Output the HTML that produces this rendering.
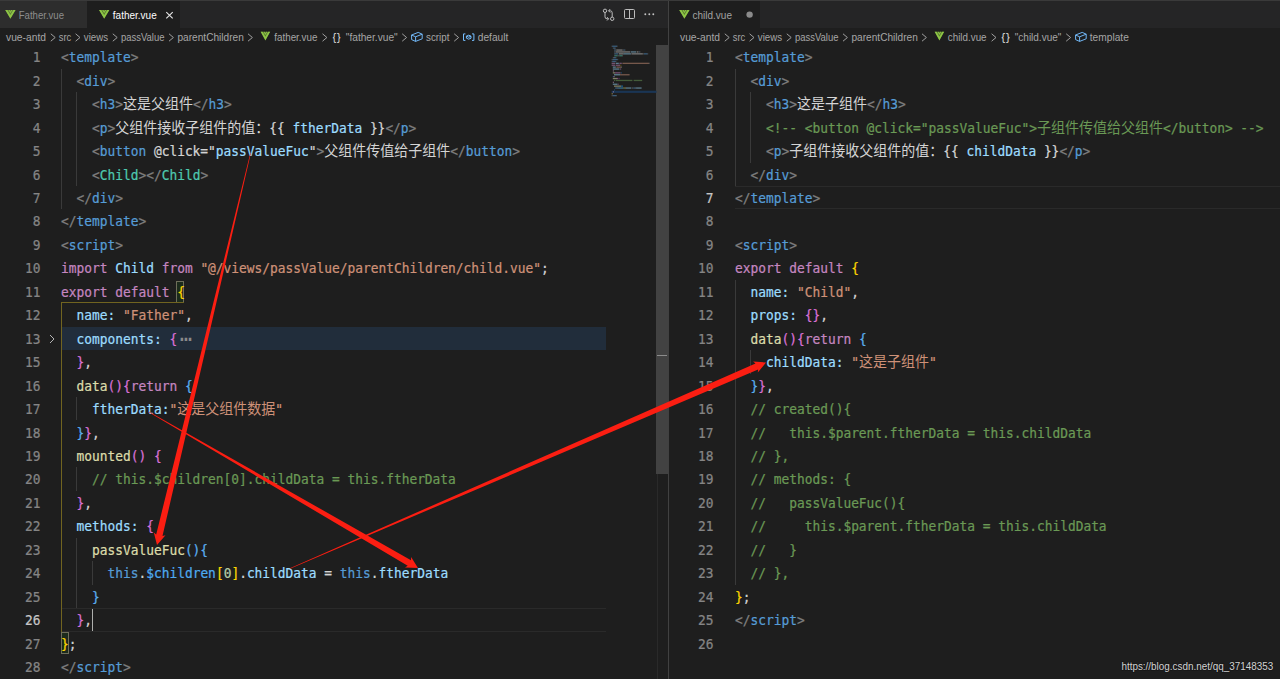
<!DOCTYPE html>
<html lang="zh"><head><meta charset="utf-8"><title>father.vue - child.vue</title>
<style>
html,body{margin:0;padding:0;background:#1e1e1e;overflow:hidden}
body{width:1280px;height:679px;position:relative;font-family:"Liberation Sans","Noto Sans CJK SC",sans-serif;color:#d4d4d4}
.abs{position:absolute}
.cl,.ln{position:absolute;height:23.45px;line-height:23.45px;white-space:pre;font-family:"DejaVu Sans Mono","Liberation Mono","Noto Sans CJK SC",monospace;font-size:12.87px;letter-spacing:0;-webkit-text-stroke:0.22px currentColor;transform:translateY(0.5px) scaleY(1.07);transform-origin:0 50%}
.ln{width:40px;text-align:right;color:#858585}
.ln.a{color:#c6c6c6}
.z{font-size:14.0px;font-family:"Noto Sans CJK SC",sans-serif;letter-spacing:0;line-height:0;position:relative;top:0.3px;-webkit-text-stroke:0}
.g{color:#808080}.b{color:#569cd6}.w{color:#d4d4d4}.v{color:#9cdcfe}.t{color:#4ec9b0}
.k{color:#c586c0}.s{color:#ce9178}.y{color:#ffd700}.p{color:#da70d6}.u{color:#5aaef0}.v2{color:#4eaaf0}
.f{color:#dcdcaa}.c{color:#6a9955}.n{color:#b5cea8}.fold{color:#8a8a8a;font-size:20px;line-height:0;margin-left:2.5px;position:relative;top:1.5px;-webkit-text-stroke:0}
.ig{position:absolute;width:1px;background:#3a3a3a}
.ig.gold{background:#716420;width:1.3px}
.tab{position:absolute;top:1px;height:27px;line-height:27px;font-size:11px;white-space:pre}
.bc{position:absolute;top:28px;height:18px;line-height:18px;font-size:11px;color:#a9a9a9;white-space:pre}
.bc i{font-style:normal;display:inline-block}
.vue{position:absolute}
</style></head><body>
<!-- top strip -->
<div class="abs" style="left:0;top:0;width:1280px;height:1px;background:#3a3a3a"></div>
<!-- tab bars -->
<div class="abs" style="left:0;top:1px;width:668px;height:27px;background:#252526"></div>
<div class="abs" style="left:669px;top:1px;width:611px;height:27px;background:#252526"></div>
<div class="abs" style="left:0;top:1px;width:87px;height:27px;background:#2d2d2d"></div>
<div class="abs" style="left:87px;top:1px;width:93px;height:27px;background:#1e1e1e"></div>
<div class="abs" style="left:669px;top:1px;width:91px;height:27px;background:#1e1e1e"></div>
<!-- pane divider -->
<div class="abs" style="left:667.5px;top:1px;width:1.3px;height:678px;background:#414141"></div>
<svg class="abs" style="left:0;top:0" width="1280" height="46" viewBox="0 0 1280 46" font-family="Liberation Sans, sans-serif" font-size="10.5">
<g transform="translate(5.20 10.10) scale(0.6500 0.6214)"><path d="M0.5 0 L8 13 L15.5 0 Z" fill="#8bc540" opacity="0.55"/><path d="M0 0 L8 14 L16 0 L12.6 0 L8 8 L3.4 0 Z" fill="#8dc545"/><path d="M5 0 L8 5.2 L11 0 L9.4 0 L8 2.4 L6.6 0 Z" fill="#8dc545"/></g>
<text x="18.75" y="18.80" textLength="45.25" lengthAdjust="spacingAndGlyphs" fill="#8e8e8e" font-size="10.5">Father.vue</text>
<g transform="translate(99.00 10.10) scale(0.6500 0.6214)"><path d="M0.5 0 L8 13 L15.5 0 Z" fill="#8bc540" opacity="0.55"/><path d="M0 0 L8 14 L16 0 L12.6 0 L8 8 L3.4 0 Z" fill="#8dc545"/><path d="M5 0 L8 5.2 L11 0 L9.4 0 L8 2.4 L6.6 0 Z" fill="#8dc545"/></g>
<text x="112.80" y="18.80" textLength="43.90" lengthAdjust="spacingAndGlyphs" fill="#ffffff" font-size="10.5">father.vue</text>
<path d="M166.3 12.2 L172.7 18.4 M172.7 12.2 L166.3 18.4" stroke="#e6e6e6" stroke-width="1.1" fill="none"/>
<g transform="translate(679.20 10.10) scale(0.6500 0.6214)"><path d="M0.5 0 L8 13 L15.5 0 Z" fill="#8bc540" opacity="0.55"/><path d="M0 0 L8 14 L16 0 L12.6 0 L8 8 L3.4 0 Z" fill="#8dc545"/><path d="M5 0 L8 5.2 L11 0 L9.4 0 L8 2.4 L6.6 0 Z" fill="#8dc545"/></g>
<text x="692.50" y="18.80" textLength="39.50" lengthAdjust="spacingAndGlyphs" fill="#a3a3a3" font-size="10.5">child.vue</text>
<circle cx="749.6" cy="14.6" r="3.2" fill="#8b8b8b"/>
<g stroke="#bdbdbd" stroke-width="1" fill="none" transform="translate(0 0.2)"><circle cx="605" cy="10.6" r="1.7"/><circle cx="612.2" cy="18.6" r="1.7"/><path d="M605 12.3 V16.6 Q605 18.6 607 18.6 H608.3 M612.2 16.9 V12.6 Q612.2 10.6 610.2 10.6 H608.9"/><path d="M607 16.9 L608.7 18.6 L607 20.3 M610.2 8.9 L608.5 10.6 L610.2 12.3"/></g>
<g stroke="#bdbdbd" stroke-width="1" fill="none"><rect x="624.5" y="9.5" width="10" height="9" rx="1"/><path d="M629.5 9.5 V18.5"/></g>
<g fill="#c4c4c4"><circle cx="645.3" cy="14.3" r="0.95"/><circle cx="649.3" cy="14.3" r="0.95"/><circle cx="653.3" cy="14.3" r="0.95"/></g>
<text x="6.00" y="41.00" textLength="40.00" lengthAdjust="spacingAndGlyphs" fill="#a6a6a6" font-size="10.5">vue-antd</text>
<path d="M50.80 33.80 l4.40 3.70 l-4.40 3.70" stroke="#a0a0a0" stroke-width="1" fill="none"/>
<text x="58.80" y="41.00" textLength="12.40" lengthAdjust="spacingAndGlyphs" fill="#a6a6a6" font-size="10.5">src</text>
<path d="M75.60 33.80 l4.40 3.70 l-4.40 3.70" stroke="#a0a0a0" stroke-width="1" fill="none"/>
<text x="83.80" y="41.00" textLength="24.20" lengthAdjust="spacingAndGlyphs" fill="#a6a6a6" font-size="10.5">views</text>
<path d="M112.80 33.80 l4.40 3.70 l-4.40 3.70" stroke="#a0a0a0" stroke-width="1" fill="none"/>
<text x="121.00" y="41.00" textLength="43.50" lengthAdjust="spacingAndGlyphs" fill="#a6a6a6" font-size="10.5">passValue</text>
<path d="M169.00 33.80 l4.40 3.70 l-4.40 3.70" stroke="#a0a0a0" stroke-width="1" fill="none"/>
<text x="177.50" y="41.00" textLength="66.30" lengthAdjust="spacingAndGlyphs" fill="#a6a6a6" font-size="10.5">parentChildren</text>
<path d="M248.00 33.80 l4.40 3.70 l-4.40 3.70" stroke="#a0a0a0" stroke-width="1" fill="none"/>
<g transform="translate(260.60 31.80) scale(0.6000 0.6143)"><path d="M0.5 0 L8 13 L15.5 0 Z" fill="#8bc540" opacity="0.55"/><path d="M0 0 L8 14 L16 0 L12.6 0 L8 8 L3.4 0 Z" fill="#8dc545"/><path d="M5 0 L8 5.2 L11 0 L9.4 0 L8 2.4 L6.6 0 Z" fill="#8dc545"/></g>
<text x="274.20" y="41.00" textLength="43.30" lengthAdjust="spacingAndGlyphs" fill="#a6a6a6" font-size="10.5">father.vue</text>
<path d="M322.50 33.80 l4.40 3.70 l-4.40 3.70" stroke="#a0a0a0" stroke-width="1" fill="none"/>
<text x="332.20" y="40.70" textLength="8.80" lengthAdjust="spacingAndGlyphs" fill="#cccccc" font-size="10.5" font-family="Liberation Mono, monospace" font-weight="bold">{}</text>
<text x="345.80" y="41.00" textLength="51.90" lengthAdjust="spacingAndGlyphs" fill="#a6a6a6" font-size="10.5">"father.vue"</text>
<path d="M402.20 33.80 l4.40 3.70 l-4.40 3.70" stroke="#a0a0a0" stroke-width="1" fill="none"/>
<g transform="translate(411.00 31.80)" stroke="#75beff" stroke-width="0.95" fill="none" stroke-linejoin="round"><path d="M0.6 3.2 L7.2 0.6 L11.2 2.4 L11.2 7 L4.6 9.6 L0.6 7.8 Z"/><path d="M0.6 3.2 L4.6 5 L11.2 2.4 M4.6 5 L4.6 9.6"/></g>
<text x="426.00" y="41.00" textLength="23.40" lengthAdjust="spacingAndGlyphs" fill="#a6a6a6" font-size="10.5">script</text>
<path d="M454.20 33.80 l4.40 3.70 l-4.40 3.70" stroke="#a0a0a0" stroke-width="1" fill="none"/>
<g transform="translate(463.00 33.40)" stroke="#75beff" stroke-width="1" fill="none"><path d="M2.4 0.5 H0.5 V7 H2.4 M9 0.5 H10.9 V7 H9"/><path d="M3.4 2.8 L5.7 1.8 L8 2.8 L8 4.8 L5.7 5.8 L3.4 4.8 Z M3.4 2.8 L5.7 3.8 L8 2.8"/></g>
<text x="477.80" y="41.00" textLength="30.50" lengthAdjust="spacingAndGlyphs" fill="#a6a6a6" font-size="10.5">default</text>
<text x="680.00" y="41.00" textLength="40.00" lengthAdjust="spacingAndGlyphs" fill="#a6a6a6" font-size="10.5">vue-antd</text>
<path d="M724.80 33.80 l4.40 3.70 l-4.40 3.70" stroke="#a0a0a0" stroke-width="1" fill="none"/>
<text x="732.80" y="41.00" textLength="12.40" lengthAdjust="spacingAndGlyphs" fill="#a6a6a6" font-size="10.5">src</text>
<path d="M749.60 33.80 l4.40 3.70 l-4.40 3.70" stroke="#a0a0a0" stroke-width="1" fill="none"/>
<text x="757.80" y="41.00" textLength="24.20" lengthAdjust="spacingAndGlyphs" fill="#a6a6a6" font-size="10.5">views</text>
<path d="M786.80 33.80 l4.40 3.70 l-4.40 3.70" stroke="#a0a0a0" stroke-width="1" fill="none"/>
<text x="795.00" y="41.00" textLength="43.50" lengthAdjust="spacingAndGlyphs" fill="#a6a6a6" font-size="10.5">passValue</text>
<path d="M843.00 33.80 l4.40 3.70 l-4.40 3.70" stroke="#a0a0a0" stroke-width="1" fill="none"/>
<text x="851.50" y="41.00" textLength="66.30" lengthAdjust="spacingAndGlyphs" fill="#a6a6a6" font-size="10.5">parentChildren</text>
<path d="M922.00 33.80 l4.40 3.70 l-4.40 3.70" stroke="#a0a0a0" stroke-width="1" fill="none"/>
<g transform="translate(934.60 31.80) scale(0.6000 0.6143)"><path d="M0.5 0 L8 13 L15.5 0 Z" fill="#8bc540" opacity="0.55"/><path d="M0 0 L8 14 L16 0 L12.6 0 L8 8 L3.4 0 Z" fill="#8dc545"/><path d="M5 0 L8 5.2 L11 0 L9.4 0 L8 2.4 L6.6 0 Z" fill="#8dc545"/></g>
<text x="947.80" y="41.00" textLength="38.80" lengthAdjust="spacingAndGlyphs" fill="#a6a6a6" font-size="10.5">child.vue</text>
<path d="M991.60 33.80 l4.40 3.70 l-4.40 3.70" stroke="#a0a0a0" stroke-width="1" fill="none"/>
<text x="1000.90" y="40.70" textLength="9.30" lengthAdjust="spacingAndGlyphs" fill="#cccccc" font-size="10.5" font-family="Liberation Mono, monospace" font-weight="bold">{}</text>
<text x="1014.80" y="41.00" textLength="46.50" lengthAdjust="spacingAndGlyphs" fill="#a6a6a6" font-size="10.5">"child.vue"</text>
<path d="M1066.20 33.80 l4.40 3.70 l-4.40 3.70" stroke="#a0a0a0" stroke-width="1" fill="none"/>
<g transform="translate(1075.00 31.80)" stroke="#75beff" stroke-width="0.95" fill="none" stroke-linejoin="round"><path d="M0.6 3.2 L7.2 0.6 L11.2 2.4 L11.2 7 L4.6 9.6 L0.6 7.8 Z"/><path d="M0.6 3.2 L4.6 5 L11.2 2.4 M4.6 5 L4.6 9.6"/></g>
<text x="1089.80" y="41.00" textLength="39.00" lengthAdjust="spacingAndGlyphs" fill="#a6a6a6" font-size="10.5">template</text>
</svg>


<!-- folded line highlight -->
<div class="abs" style="left:61px;top:326.70px;width:545px;height:23.45px;background:#212d3b"></div>
<!-- current line right -->
<div class="abs" style="left:735px;top:186.00px;width:545px;height:21.45px;border-top:1px solid #2a2a2a;border-bottom:1px solid #2a2a2a"></div>
<div class="abs" style="left:61px;top:608.10px;width:545px;height:21.45px;border-top:1px solid #2a2a2a;border-bottom:1px solid #2a2a2a"></div>
<div class="ig" style="left:61.00px;top:68.75px;height:140.70px"></div>
<div class="ig" style="left:76.49px;top:92.20px;height:93.80px"></div>
<div class="ig gold" style="left:61.00px;top:303.25px;height:328.30px"></div>
<div class="ig" style="left:76.49px;top:397.05px;height:23.45px"></div>
<div class="ig" style="left:76.49px;top:467.40px;height:23.45px"></div>
<div class="ig" style="left:76.49px;top:537.75px;height:70.35px"></div>
<div class="ig" style="left:91.98px;top:561.20px;height:23.45px"></div>
<div class="ig" style="left:735.00px;top:68.75px;height:117.25px"></div>
<div class="ig" style="left:750.49px;top:92.20px;height:70.35px"></div>
<div class="ig" style="left:735.00px;top:279.80px;height:304.85px"></div>
<div class="ig" style="left:750.49px;top:350.15px;height:23.45px"></div>
<!-- bracket match boxes -->
<div class="abs" style="left:176px;top:280.5px;width:8px;height:22px;border:1px solid #6e6e5a;background:#1c2b1c;box-sizing:border-box"></div>
<div class="abs" style="left:60.5px;top:631.5px;width:8.5px;height:22.5px;border:1px solid #6e6e5a;background:#1c2b1c;box-sizing:border-box"></div>
<div class="abs" style="left:61px;top:302px;width:123px;height:1.2px;background:#716420"></div>
<div class="ln" style="top:45.30px;left:0.50px">1</div>
<div class="cl" style="top:45.30px;left:61.00px"><span class="g">&lt;</span><span class="b">template</span><span class="g">&gt;</span></div>
<div class="ln" style="top:68.75px;left:0.50px">2</div>
<div class="cl" style="top:68.75px;left:76.49px"><span class="g">&lt;</span><span class="b">div</span><span class="g">&gt;</span></div>
<div class="ln" style="top:92.20px;left:0.50px">3</div>
<div class="cl" style="top:92.20px;left:91.98px"><span class="g">&lt;</span><span class="b">h3</span><span class="g">&gt;</span><span class="w"><span class="z">这是父组件</span></span><span class="g">&lt;/</span><span class="b">h3</span><span class="g">&gt;</span></div>
<div class="ln" style="top:115.65px;left:0.50px">4</div>
<div class="cl" style="top:115.65px;left:91.98px"><span class="g">&lt;</span><span class="b">p</span><span class="g">&gt;</span><span class="w"><span class="z">父组件接收子组件的值：</span>{{ </span><span class="v">ftherData</span><span class="w"> }}</span><span class="g">&lt;/</span><span class="b">p</span><span class="g">&gt;</span></div>
<div class="ln" style="top:139.10px;left:0.50px">5</div>
<div class="cl" style="top:139.10px;left:91.98px"><span class="g">&lt;</span><span class="b">button</span><span class="w"> @click="</span><span class="v">passValueFuc</span><span class="w">"</span><span class="g">&gt;</span><span class="w"><span class="z">父组件传值给子组件</span></span><span class="g">&lt;/</span><span class="b">button</span><span class="g">&gt;</span></div>
<div class="ln" style="top:162.55px;left:0.50px">6</div>
<div class="cl" style="top:162.55px;left:91.98px"><span class="g">&lt;</span><span class="t">Child</span><span class="g">&gt;</span><span class="g">&lt;/</span><span class="t">Child</span><span class="g">&gt;</span></div>
<div class="ln" style="top:186.00px;left:0.50px">7</div>
<div class="cl" style="top:186.00px;left:76.49px"><span class="g">&lt;/</span><span class="b">div</span><span class="g">&gt;</span></div>
<div class="ln" style="top:209.45px;left:0.50px">8</div>
<div class="cl" style="top:209.45px;left:61.00px"><span class="g">&lt;/</span><span class="b">template</span><span class="g">&gt;</span></div>
<div class="ln" style="top:232.90px;left:0.50px">9</div>
<div class="cl" style="top:232.90px;left:61.00px"><span class="g">&lt;</span><span class="b">script</span><span class="g">&gt;</span></div>
<div class="ln" style="top:256.35px;left:0.50px">10</div>
<div class="cl" style="top:256.35px;left:61.00px"><span class="k">import </span><span class="v">Child </span><span class="k">from </span><span class="s">"@/views/passValue/parentChildren/child.vue"</span><span class="w">;</span></div>
<div class="ln" style="top:279.80px;left:0.50px">11</div>
<div class="cl" style="top:279.80px;left:61.00px"><span class="k">export default </span><span class="y">{</span></div>
<div class="ln" style="top:303.25px;left:0.50px">12</div>
<div class="cl" style="top:303.25px;left:76.49px"><span class="v">name: </span><span class="s">"Father"</span><span class="w">,</span></div>
<div class="ln" style="top:326.70px;left:0.50px">13</div>
<div class="cl" style="top:326.70px;left:76.49px"><span class="v">components: </span><span class="p">{</span><span class="fold">⋯</span></div>
<div class="ln" style="top:350.15px;left:0.50px">15</div>
<div class="cl" style="top:350.15px;left:76.49px"><span class="p">}</span><span class="w">,</span></div>
<div class="ln" style="top:373.60px;left:0.50px">16</div>
<div class="cl" style="top:373.60px;left:76.49px"><span class="f">data</span><span class="p">(){</span><span class="k">return </span><span class="u">{</span></div>
<div class="ln" style="top:397.05px;left:0.50px">17</div>
<div class="cl" style="top:397.05px;left:91.98px"><span class="v">ftherData:</span><span class="s">"<span class="z">这是父组件数据</span>"</span></div>
<div class="ln" style="top:420.50px;left:0.50px">18</div>
<div class="cl" style="top:420.50px;left:76.49px"><span class="u">}</span><span class="p">}</span><span class="w">,</span></div>
<div class="ln" style="top:443.95px;left:0.50px">19</div>
<div class="cl" style="top:443.95px;left:76.49px"><span class="f">mounted</span><span class="p">() {</span></div>
<div class="ln" style="top:467.40px;left:0.50px">20</div>
<div class="cl" style="top:467.40px;left:91.98px"><span class="c">// this.$children[0].childData = this.ftherData</span></div>
<div class="ln" style="top:490.85px;left:0.50px">21</div>
<div class="cl" style="top:490.85px;left:76.49px"><span class="p">}</span><span class="w">,</span></div>
<div class="ln" style="top:514.30px;left:0.50px">22</div>
<div class="cl" style="top:514.30px;left:76.49px"><span class="v">methods: </span><span class="p">{</span></div>
<div class="ln" style="top:537.75px;left:0.50px">23</div>
<div class="cl" style="top:537.75px;left:91.98px"><span class="f">passValueFuc</span><span class="u">(){</span></div>
<div class="ln" style="top:561.20px;left:0.50px">24</div>
<div class="cl" style="top:561.20px;left:107.48px"><span class="b">this</span><span class="w">.</span><span class="v2">$children</span><span class="y">[</span><span class="n">0</span><span class="y">]</span><span class="w">.</span><span class="v">childData</span><span class="w"> = </span><span class="b">this</span><span class="w">.</span><span class="v">ftherData</span></div>
<div class="ln" style="top:584.65px;left:0.50px">25</div>
<div class="cl" style="top:584.65px;left:91.98px"><span class="u">}</span></div>
<div class="ln a" style="top:608.10px;left:0.50px">26</div>
<div class="cl" style="top:608.10px;left:76.49px"><span class="p">}</span><span class="w">,</span></div>
<div class="ln" style="top:631.55px;left:0.50px">27</div>
<div class="cl" style="top:631.55px;left:61.00px"><span class="y">}</span><span class="w">;</span></div>
<div class="ln" style="top:655.00px;left:0.50px">28</div>
<div class="cl" style="top:655.00px;left:61.00px"><span class="g">&lt;/</span><span class="b">script</span><span class="g">&gt;</span></div>
<div class="ln" style="top:45.30px;left:673.50px">1</div>
<div class="cl" style="top:45.30px;left:735.00px"><span class="g">&lt;</span><span class="b">template</span><span class="g">&gt;</span></div>
<div class="ln" style="top:68.75px;left:673.50px">2</div>
<div class="cl" style="top:68.75px;left:750.49px"><span class="g">&lt;</span><span class="b">div</span><span class="g">&gt;</span></div>
<div class="ln" style="top:92.20px;left:673.50px">3</div>
<div class="cl" style="top:92.20px;left:765.98px"><span class="g">&lt;</span><span class="b">h3</span><span class="g">&gt;</span><span class="w"><span class="z">这是子组件</span></span><span class="g">&lt;/</span><span class="b">h3</span><span class="g">&gt;</span></div>
<div class="ln" style="top:115.65px;left:673.50px">4</div>
<div class="cl" style="top:115.65px;left:765.98px"><span class="c">&lt;!-- &lt;button @click="passValueFuc"&gt;<span class="z">子组件传值给父组件</span>&lt;/button&gt; --&gt;</span></div>
<div class="ln" style="top:139.10px;left:673.50px">5</div>
<div class="cl" style="top:139.10px;left:765.98px"><span class="g">&lt;</span><span class="b">p</span><span class="g">&gt;</span><span class="w"><span class="z">子组件接收父组件的值：</span>{{ </span><span class="v">childData</span><span class="w"> }}</span><span class="g">&lt;/</span><span class="b">p</span><span class="g">&gt;</span></div>
<div class="ln" style="top:162.55px;left:673.50px">6</div>
<div class="cl" style="top:162.55px;left:750.49px"><span class="g">&lt;/</span><span class="b">div</span><span class="g">&gt;</span></div>
<div class="ln a" style="top:186.00px;left:673.50px">7</div>
<div class="cl" style="top:186.00px;left:735.00px"><span class="g">&lt;/</span><span class="b">template</span><span class="g">&gt;</span></div>
<div class="ln" style="top:209.45px;left:673.50px">8</div>
<div class="ln" style="top:232.90px;left:673.50px">9</div>
<div class="cl" style="top:232.90px;left:735.00px"><span class="g">&lt;</span><span class="b">script</span><span class="g">&gt;</span></div>
<div class="ln" style="top:256.35px;left:673.50px">10</div>
<div class="cl" style="top:256.35px;left:735.00px"><span class="k">export default </span><span class="y">{</span></div>
<div class="ln" style="top:279.80px;left:673.50px">11</div>
<div class="cl" style="top:279.80px;left:750.49px"><span class="v">name: </span><span class="s">"Child"</span><span class="w">,</span></div>
<div class="ln" style="top:303.25px;left:673.50px">12</div>
<div class="cl" style="top:303.25px;left:750.49px"><span class="v">props: </span><span class="p">{}</span><span class="w">,</span></div>
<div class="ln" style="top:326.70px;left:673.50px">13</div>
<div class="cl" style="top:326.70px;left:750.49px"><span class="f">data</span><span class="p">(){</span><span class="k">return </span><span class="u">{</span></div>
<div class="ln" style="top:350.15px;left:673.50px">14</div>
<div class="cl" style="top:350.15px;left:765.98px"><span class="v">childData: </span><span class="s">"<span class="z">这是子组件</span>"</span></div>
<div class="ln" style="top:373.60px;left:673.50px">15</div>
<div class="cl" style="top:373.60px;left:750.49px"><span class="u">}</span><span class="p">}</span><span class="w">,</span></div>
<div class="ln" style="top:397.05px;left:673.50px">16</div>
<div class="cl" style="top:397.05px;left:750.49px"><span class="c">// created(){</span></div>
<div class="ln" style="top:420.50px;left:673.50px">17</div>
<div class="cl" style="top:420.50px;left:750.49px"><span class="c">//   this.$parent.ftherData = this.childData</span></div>
<div class="ln" style="top:443.95px;left:673.50px">18</div>
<div class="cl" style="top:443.95px;left:750.49px"><span class="c">// },</span></div>
<div class="ln" style="top:467.40px;left:673.50px">19</div>
<div class="cl" style="top:467.40px;left:750.49px"><span class="c">// methods: {</span></div>
<div class="ln" style="top:490.85px;left:673.50px">20</div>
<div class="cl" style="top:490.85px;left:750.49px"><span class="c">//   passValueFuc(){</span></div>
<div class="ln" style="top:514.30px;left:673.50px">21</div>
<div class="cl" style="top:514.30px;left:750.49px"><span class="c">//     this.$parent.ftherData = this.childData</span></div>
<div class="ln" style="top:537.75px;left:673.50px">22</div>
<div class="cl" style="top:537.75px;left:750.49px"><span class="c">//   }</span></div>
<div class="ln" style="top:561.20px;left:673.50px">23</div>
<div class="cl" style="top:561.20px;left:750.49px"><span class="c">// },</span></div>
<div class="ln" style="top:584.65px;left:673.50px">24</div>
<div class="cl" style="top:584.65px;left:735.00px"><span class="y">}</span><span class="w">;</span></div>
<div class="ln" style="top:608.10px;left:673.50px">25</div>
<div class="cl" style="top:608.10px;left:735.00px"><span class="g">&lt;/</span><span class="b">script</span><span class="g">&gt;</span></div>
<div class="ln" style="top:631.55px;left:673.50px">26</div>

<!-- minimap slider / scrollbar -->
<div class="abs" style="left:656.2px;top:45.3px;width:11.9px;height:428.7px;background:#424242"></div>
<div class="abs" style="left:656.5px;top:474px;width:1px;height:205px;background:#2a2a2a"></div>
<div class="abs" style="left:657.1px;top:354.8px;width:10px;height:1.2px;background:#8c8c8c"></div>
<!-- fold chevron -->
<svg class="abs" style="left:47px;top:333px" width="10" height="12" viewBox="0 0 10 12"><path d="M3 2 L7 6 L3 10" stroke="#b4b4b4" stroke-width="1" fill="none"/></svg>
<!-- cursor -->
<div class="abs" style="left:92px;top:609px;width:1.3px;height:22px;background:#aeafad"></div>
<!-- arrows -->
<svg class="abs" style="left:0;top:0" width="1280" height="679" viewBox="0 0 1280 679">
<rect x="611.6" y="90.70" width="44.9" height="2.20" fill="#1a3554"/>
<rect x="611.60" y="45.60" width="0.60" height="1.3" fill="#808080" opacity="0.5"/>
<rect x="612.20" y="45.60" width="4.80" height="1.3" fill="#569cd6" opacity="0.5"/>
<rect x="617.00" y="45.60" width="0.60" height="1.3" fill="#808080" opacity="0.5"/>
<rect x="612.80" y="47.50" width="0.60" height="1.3" fill="#808080" opacity="0.5"/>
<rect x="613.40" y="47.50" width="1.80" height="1.3" fill="#569cd6" opacity="0.5"/>
<rect x="615.20" y="47.50" width="0.60" height="1.3" fill="#808080" opacity="0.5"/>
<rect x="614.00" y="49.40" width="0.60" height="1.3" fill="#808080" opacity="0.5"/>
<rect x="614.60" y="49.40" width="1.20" height="1.3" fill="#569cd6" opacity="0.5"/>
<rect x="615.80" y="49.40" width="0.60" height="1.3" fill="#808080" opacity="0.5"/>
<rect x="616.40" y="49.40" width="6.00" height="1.3" fill="#d4d4d4" opacity="0.5"/>
<rect x="622.40" y="49.40" width="1.20" height="1.3" fill="#808080" opacity="0.5"/>
<rect x="623.60" y="49.40" width="1.20" height="1.3" fill="#569cd6" opacity="0.5"/>
<rect x="624.80" y="49.40" width="0.60" height="1.3" fill="#808080" opacity="0.5"/>
<rect x="614.00" y="51.30" width="0.60" height="1.3" fill="#808080" opacity="0.5"/>
<rect x="614.60" y="51.30" width="0.60" height="1.3" fill="#569cd6" opacity="0.5"/>
<rect x="615.20" y="51.30" width="0.60" height="1.3" fill="#808080" opacity="0.5"/>
<rect x="615.80" y="51.30" width="14.40" height="1.3" fill="#d4d4d4" opacity="0.5"/>
<rect x="630.80" y="51.30" width="5.40" height="1.3" fill="#9cdcfe" opacity="0.5"/>
<rect x="636.80" y="51.30" width="1.20" height="1.3" fill="#d4d4d4" opacity="0.5"/>
<rect x="638.00" y="51.30" width="1.20" height="1.3" fill="#808080" opacity="0.5"/>
<rect x="639.20" y="51.30" width="0.60" height="1.3" fill="#569cd6" opacity="0.5"/>
<rect x="639.80" y="51.30" width="0.60" height="1.3" fill="#808080" opacity="0.5"/>
<rect x="614.00" y="53.20" width="0.60" height="1.3" fill="#808080" opacity="0.5"/>
<rect x="614.60" y="53.20" width="3.60" height="1.3" fill="#569cd6" opacity="0.5"/>
<rect x="618.80" y="53.20" width="4.80" height="1.3" fill="#d4d4d4" opacity="0.5"/>
<rect x="623.60" y="53.20" width="7.20" height="1.3" fill="#9cdcfe" opacity="0.5"/>
<rect x="630.80" y="53.20" width="0.60" height="1.3" fill="#d4d4d4" opacity="0.5"/>
<rect x="631.40" y="53.20" width="0.60" height="1.3" fill="#808080" opacity="0.5"/>
<rect x="632.00" y="53.20" width="10.80" height="1.3" fill="#d4d4d4" opacity="0.5"/>
<rect x="642.80" y="53.20" width="1.20" height="1.3" fill="#808080" opacity="0.5"/>
<rect x="644.00" y="53.20" width="3.60" height="1.3" fill="#569cd6" opacity="0.5"/>
<rect x="647.60" y="53.20" width="0.60" height="1.3" fill="#808080" opacity="0.5"/>
<rect x="614.00" y="55.10" width="0.60" height="1.3" fill="#808080" opacity="0.5"/>
<rect x="614.60" y="55.10" width="3.00" height="1.3" fill="#4ec9b0" opacity="0.5"/>
<rect x="617.60" y="55.10" width="0.60" height="1.3" fill="#808080" opacity="0.5"/>
<rect x="618.20" y="55.10" width="1.20" height="1.3" fill="#808080" opacity="0.5"/>
<rect x="619.40" y="55.10" width="3.00" height="1.3" fill="#4ec9b0" opacity="0.5"/>
<rect x="622.40" y="55.10" width="0.60" height="1.3" fill="#808080" opacity="0.5"/>
<rect x="612.80" y="57.00" width="1.20" height="1.3" fill="#808080" opacity="0.5"/>
<rect x="614.00" y="57.00" width="1.80" height="1.3" fill="#569cd6" opacity="0.5"/>
<rect x="615.80" y="57.00" width="0.60" height="1.3" fill="#808080" opacity="0.5"/>
<rect x="611.60" y="58.90" width="1.20" height="1.3" fill="#808080" opacity="0.5"/>
<rect x="612.80" y="58.90" width="4.80" height="1.3" fill="#569cd6" opacity="0.5"/>
<rect x="617.60" y="58.90" width="0.60" height="1.3" fill="#808080" opacity="0.5"/>
<rect x="611.60" y="60.80" width="0.60" height="1.3" fill="#808080" opacity="0.5"/>
<rect x="612.20" y="60.80" width="3.60" height="1.3" fill="#569cd6" opacity="0.5"/>
<rect x="615.80" y="60.80" width="0.60" height="1.3" fill="#808080" opacity="0.5"/>
<rect x="611.60" y="62.70" width="3.60" height="1.3" fill="#c586c0" opacity="0.5"/>
<rect x="615.80" y="62.70" width="3.00" height="1.3" fill="#9cdcfe" opacity="0.5"/>
<rect x="619.40" y="62.70" width="2.40" height="1.3" fill="#c586c0" opacity="0.5"/>
<rect x="622.40" y="62.70" width="26.40" height="1.3" fill="#ce9178" opacity="0.5"/>
<rect x="648.80" y="62.70" width="0.60" height="1.3" fill="#d4d4d4" opacity="0.5"/>
<rect x="611.60" y="64.60" width="3.60" height="1.3" fill="#c586c0" opacity="0.5"/>
<rect x="615.80" y="64.60" width="4.20" height="1.3" fill="#c586c0" opacity="0.5"/>
<rect x="620.60" y="64.60" width="0.60" height="1.3" fill="#ffd700" opacity="0.5"/>
<rect x="612.80" y="66.50" width="3.00" height="1.3" fill="#9cdcfe" opacity="0.5"/>
<rect x="616.40" y="66.50" width="4.80" height="1.3" fill="#ce9178" opacity="0.5"/>
<rect x="621.20" y="66.50" width="0.60" height="1.3" fill="#d4d4d4" opacity="0.5"/>
<rect x="612.80" y="68.40" width="6.60" height="1.3" fill="#9cdcfe" opacity="0.5"/>
<rect x="620.00" y="68.40" width="0.60" height="1.3" fill="#da70d6" opacity="0.5"/>
<rect x="620.60" y="68.40" width="0.60" height="1.3" fill="#808080" opacity="0.5"/>
<rect x="612.80" y="70.30" width="0.60" height="1.3" fill="#da70d6" opacity="0.5"/>
<rect x="613.40" y="70.30" width="0.60" height="1.3" fill="#d4d4d4" opacity="0.5"/>
<rect x="612.80" y="72.20" width="2.40" height="1.3" fill="#dcdcaa" opacity="0.5"/>
<rect x="615.20" y="72.20" width="1.80" height="1.3" fill="#da70d6" opacity="0.5"/>
<rect x="617.00" y="72.20" width="3.60" height="1.3" fill="#c586c0" opacity="0.5"/>
<rect x="621.20" y="72.20" width="0.60" height="1.3" fill="#179fff" opacity="0.5"/>
<rect x="614.00" y="74.10" width="6.00" height="1.3" fill="#9cdcfe" opacity="0.5"/>
<rect x="620.00" y="74.10" width="9.60" height="1.3" fill="#ce9178" opacity="0.5"/>
<rect x="612.80" y="76.00" width="0.60" height="1.3" fill="#179fff" opacity="0.5"/>
<rect x="613.40" y="76.00" width="0.60" height="1.3" fill="#da70d6" opacity="0.5"/>
<rect x="614.00" y="76.00" width="0.60" height="1.3" fill="#d4d4d4" opacity="0.5"/>
<rect x="612.80" y="77.90" width="4.20" height="1.3" fill="#dcdcaa" opacity="0.5"/>
<rect x="617.00" y="77.90" width="1.20" height="1.3" fill="#da70d6" opacity="0.5"/>
<rect x="618.80" y="77.90" width="0.60" height="1.3" fill="#da70d6" opacity="0.5"/>
<rect x="614.00" y="79.80" width="1.20" height="1.3" fill="#6a9955" opacity="0.5"/>
<rect x="615.80" y="79.80" width="16.20" height="1.3" fill="#6a9955" opacity="0.5"/>
<rect x="632.60" y="79.80" width="0.60" height="1.3" fill="#6a9955" opacity="0.5"/>
<rect x="633.80" y="79.80" width="8.40" height="1.3" fill="#6a9955" opacity="0.5"/>
<rect x="612.80" y="81.70" width="0.60" height="1.3" fill="#da70d6" opacity="0.5"/>
<rect x="613.40" y="81.70" width="0.60" height="1.3" fill="#d4d4d4" opacity="0.5"/>
<rect x="612.80" y="83.60" width="4.80" height="1.3" fill="#9cdcfe" opacity="0.5"/>
<rect x="618.20" y="83.60" width="0.60" height="1.3" fill="#da70d6" opacity="0.5"/>
<rect x="614.00" y="85.50" width="7.20" height="1.3" fill="#dcdcaa" opacity="0.5"/>
<rect x="621.20" y="85.50" width="1.80" height="1.3" fill="#179fff" opacity="0.5"/>
<rect x="615.20" y="87.40" width="2.40" height="1.3" fill="#569cd6" opacity="0.5"/>
<rect x="617.60" y="87.40" width="0.60" height="1.3" fill="#d4d4d4" opacity="0.5"/>
<rect x="618.20" y="87.40" width="5.40" height="1.3" fill="#4fc1ff" opacity="0.5"/>
<rect x="623.60" y="87.40" width="0.60" height="1.3" fill="#ffd700" opacity="0.5"/>
<rect x="624.20" y="87.40" width="0.60" height="1.3" fill="#b5cea8" opacity="0.5"/>
<rect x="624.80" y="87.40" width="0.60" height="1.3" fill="#ffd700" opacity="0.5"/>
<rect x="625.40" y="87.40" width="0.60" height="1.3" fill="#d4d4d4" opacity="0.5"/>
<rect x="626.00" y="87.40" width="5.40" height="1.3" fill="#9cdcfe" opacity="0.5"/>
<rect x="632.00" y="87.40" width="0.60" height="1.3" fill="#d4d4d4" opacity="0.5"/>
<rect x="633.20" y="87.40" width="2.40" height="1.3" fill="#569cd6" opacity="0.5"/>
<rect x="635.60" y="87.40" width="0.60" height="1.3" fill="#d4d4d4" opacity="0.5"/>
<rect x="636.20" y="87.40" width="5.40" height="1.3" fill="#9cdcfe" opacity="0.5"/>
<rect x="614.00" y="89.30" width="0.60" height="1.3" fill="#179fff" opacity="0.5"/>
<rect x="612.80" y="91.20" width="0.60" height="1.3" fill="#da70d6" opacity="0.5"/>
<rect x="613.40" y="91.20" width="0.60" height="1.3" fill="#d4d4d4" opacity="0.5"/>
<rect x="611.60" y="93.10" width="0.60" height="1.3" fill="#ffd700" opacity="0.5"/>
<rect x="612.20" y="93.10" width="0.60" height="1.3" fill="#d4d4d4" opacity="0.5"/>
<rect x="611.60" y="95.00" width="1.20" height="1.3" fill="#808080" opacity="0.5"/>
<rect x="612.80" y="95.00" width="3.60" height="1.3" fill="#569cd6" opacity="0.5"/>
<rect x="616.40" y="95.00" width="0.60" height="1.3" fill="#808080" opacity="0.5"/>
<polygon points="250.2,153.4 156.2,534.5 153.8,532.4 157.0,545.0 165.5,535.2 162.5,536.0 250.8,153.6" fill="#fb1e12"/>
<polygon points="148.8,412.3 407.7,565.8 405.0,567.4 418.0,568.0 411.1,557.0 411.0,560.2 149.2,411.7" fill="#fb1e12"/>
<polygon points="290.1,568.8 758.1,369.5 757.8,372.6 766.0,362.5 753.1,361.6 755.5,363.5 289.9,568.2" fill="#fb1e12"/>
<text x="1121.4" y="670.4" textLength="151.9" lengthAdjust="spacingAndGlyphs" font-family="Liberation Sans, sans-serif" font-size="10.4" fill="#d2d2d2" stroke="#111" stroke-width="1.6" stroke-opacity="0.55" paint-order="stroke">https://blog.csdn.net/qq_37148353</text>
</svg>


</body></html>
